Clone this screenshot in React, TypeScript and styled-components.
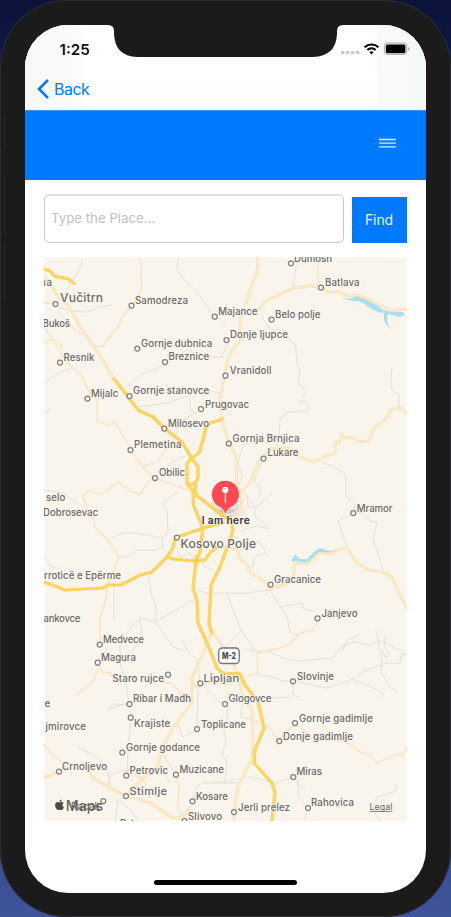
import React from "react";
import styled, { createGlobalStyle } from "styled-components";
import { FaApple } from "react-icons/fa";

const GlobalStyle = createGlobalStyle`
  * { box-sizing: border-box; }
  html, body { margin: 0; padding: 0; }
  body { width: 451px; height: 917px; overflow: hidden; font-family: Inter, "Liberation Sans", sans-serif; }
`;

const Desktop = styled.main`
  width: 451px;
  height: 917px;
  background: linear-gradient(#0b1339 0%, #131e55 12%, #2e4182 80%, #40549b 100%);
`;

const Device = styled.div`
  position: relative;
  width: 451px;
  height: 917px;
  padding: 25px;
  background: #1b1b1b;
  border-radius: 67px;
  box-shadow: inset 0 0 0 1px #2c2d33;
`;

const SideButton = styled.span<{ $top: number; $height: number }>`
  position: absolute;
  left: 0;
  top: ${(p) => p.$top}px;
  width: 5px;
  height: ${(p) => p.$height}px;
  border-right: 1px solid #292929;
  border-left: 1px solid #2b2b2b;
  background: #1b1b1b;
`;

const Screen = styled.div`
  position: relative;
  display: flex;
  flex-direction: column;
  width: 401px;
  height: 868px;
  border-radius: 43px;
  overflow: hidden;
  background: #fff;
`;

const Notch = styled.svg`
  position: absolute;
  left: 83px;
  top: 0;
  display: block;
`;

const TopChrome = styled.header`
  display: flex;
  flex-direction: column;
  height: 85px;
  background: linear-gradient(90deg, #f8f8f8 0, #fbfbfb 55px, transparent 62px, transparent 350px, #f8fafa 354px, #f7f9f8 100%),
    linear-gradient(#fff 50%, #fafdff);
`;

const StatusBar = styled.div`
  display: flex;
  justify-content: space-between;
  height: 47px;
  padding: 15px 15px 0 34.5px;
`;

const Clock = styled.time`
  font-size: 15.2px;
  line-height: 19px;
  font-weight: 600;
  color: #111;
`;

const NavBar = styled.nav`
  display: flex;
  height: 38px;
  padding: 5px 0 0 11px;
`;

const BackButton = styled.button`
  display: flex;
  align-items: flex-start;
  gap: 4px;
  height: 24px;
  padding: 0;
  border: 0;
  background: none;
  color: #007aff;
  font: 400 16px/24px Inter, sans-serif;
  letter-spacing: -0.5px;
`;

const BlueHeader = styled.div`
  display: flex;
  justify-content: flex-end;
  height: 70px;
  padding: 27px 30px 0 0;
  border-top: 1px solid #3c90f0;
  background: #007aff;
`;

const MenuButton = styled.button`
  width: 17px;
  height: 10px;
  padding: 0;
  border: 0;
  background: none;
  svg { display: block; }
`;

const SearchRow = styled.form`
  display: flex;
  align-items: flex-end;
  gap: 7.500px;
  height: 63px;
  padding: 14px 19.500px 0 19px;
  border-top: 1px solid #f6f7f8;
`;

const PlaceInput = styled.input`
  flex: none;
  width: 300px;
  height: 49px;
  padding: 0 6px 2px;
  border: 1px solid #c9c9c9;
  border-top: 2px solid #e0e0e0;
  border-radius: 5px;
  background: #fff;
  font: 400 13.3px Inter, sans-serif;
  letter-spacing: -0.02px;
  outline: none;
  &::placeholder { color: #c2c2c2; opacity: 1; }
`;

const FindButton = styled.button`
  flex: 1;
  height: 46.500px;
  padding: 0;
  border: 0;
  background: #007aff;
  color: #e6f2ff;
  font: 400 14px Inter, sans-serif;
  letter-spacing: -0.1px;
`;

const MapFrame = styled.section`
  height: 564px;
  margin: 14px 19px 0;
  svg.map { display: block; }
`;

const HomeIndicator = styled.div`
  width: 143px;
  height: 5px;
  margin: auto auto 8px 129px;
  border-radius: 3px;
  background: #000;
`;

const MapText = styled.text<{ $size: number; $weight?: number; $fill?: string }>`
  font-family: Inter, sans-serif;
  font-size: ${(p) => p.$size}px;
  font-weight: ${(p) => p.$weight ?? 500};
  fill: ${(p) => p.$fill ?? "#6b6b6a"};
  stroke: #f9f4ec;
  stroke-width: 1.4px;
  stroke-linejoin: round;
  paint-order: stroke;
`;

type Label = [text: string, x: number, end: number, y: number, cx?: number, cy?: number, size?: number];

const labels: Label[] = [
  ["Dumosh", 294, 332, 261.3, 291, 263.3],
  ["na", 40, 52, 286],
  ["Vučitrn", 60, 103, 301.9, 55.5, 304, 12],
  ["Bukoš", 42.5, 70, 326.7],
  ["Samodreza", 135, 188, 303.4, 131.5, 305.5],
  ["Majance", 218.3, 257.5, 315, 214.7, 316.7],
  ["Belo polje", 275, 320.5, 317.4, 271.5, 319.5],
  ["Donje ljupce", 230, 288, 337.7, 226.5, 340],
  ["Batlava", 325, 359.5, 285.7, 321, 287.5],
  ["Gornje dubnica", 141, 212.3, 346.8, 137.3, 348.5],
  ["Breznice", 168.5, 209.3, 360.1, 165, 362],
  ["Resnik", 63.5, 94.5, 360.7, 60, 362.5],
  ["Vranidoll", 229.7, 271.5, 373.8, 225.5, 375.7],
  ["Mijalc", 91, 118.3, 396.6, 87.5, 398.5],
  ["Gornje stanovce", 133, 209.3, 394, 129.5, 396],
  ["Prugovac", 205, 249, 407.6, 201, 409],
  ["Milosevo", 168, 209, 426.3, 164.3, 428.5],
  ["Plemetina", 134, 181.5, 448.2, 130.5, 450],
  ["Obilic", 159, 185, 476.1, 155, 478],
  ["Gornja Brnjica", 232.5, 299.5, 441.8, 228.8, 443.5],
  ["Lukare", 267.5, 298.5, 456.2, 263.5, 458.5],
  ["selo", 46, 65.3, 500.6],
  ["Dobrosevac", 43, 98, 515.3],
  ["Mramor", 356.8, 392.6, 511.5, 353.3, 513],
  ["Kosovo Polje", 180.5, 256, 547.6, 177, 537.5, 12],
  ["rroticë e Epërme", 44, 121, 579],
  ["Gracanice", 274, 321, 582.6, 270.5, 584.5],
  ["Janjevo", 321.5, 357.5, 616.4, 317.5, 618.3],
  ["ankovce", 43.5, 80.5, 621.8],
  ["Medvece", 103, 144, 642.5, 99.7, 644.5],
  ["Magura", 101, 136, 661.2, 97.7, 662.7],
  ["Staro rujce", 112.5, 164, 681.7, 168, 674.7],
  ["Lipljan", 203.5, 239, 681.7, 200.3, 683.3, 11],
  ["Slovinje", 297, 334, 679.5, 293, 681.3],
  ["e", 44.5, 50, 706.6],
  ["Ribar i Madh", 133, 191, 702.1, 129.5, 704],
  ["Glogovce", 228.5, 271.5, 702, 225, 704],
  ["Krajiste", 134, 170.3, 726.6, 130.7, 717.7],
  ["Toplicane", 201, 246, 727.6, 197, 729],
  ["jmirovce", 45.5, 86, 730.2],
  ["Gornje gadimlje", 299, 373, 721.9, 295, 723],
  ["Donje gadimlje", 283, 353, 739.7, 279.3, 741],
  ["Gornje godance", 126, 200, 750.6, 122.3, 752.5],
  ["Crnoljevo", 62, 107, 769.7, 59, 771.5],
  ["Petrovic", 129.5, 168, 773.4, 126.3, 775.5],
  ["Muzicane", 179.5, 224, 772.7, 176, 774.7],
  ["Miras", 296.5, 322, 774.8, 293.3, 777],
  ["Stimlje", 129.5, 167, 794.4, 126, 796, 11],
  ["Kosare", 196, 228, 799.5, 192.5, 801.3],
  ["Racak", 71, 100, 809.5, 103.3, 801],
  ["Slivovo", 188, 222, 819.3, 184.5, 821],
  ["Jerli prelez", 238, 290, 810.4, 234, 812],
  ["Rahovica", 311, 354, 806.1, 308, 808],
  ["Petrovo", 120, 153, 827],
];

const trails = [
  "83,258 78,272 68,288 62,298", "60,307 70,311 88,312 100,307 112,305", "58,312 80,334 85,333",
  "178,258 177,268 180,275 197,292 213,315 226,323", "297,258 293,288", "262,317 270,330 282,330 295,345 296,350 297,363 300,372 298,382 306,392 300,401 308,403 308,411 287,412 280,420 279,437 277,447",
  "392,368 391,377 392,390 399,395 399,407", "322,462 340,470 346,475 346,495 355,505 353,513 338,521 347,547",
  "353,513 363,513 370,521 377,522 373,538 383,570", "127,387 140,375 165,365 177,355 187,350 207,357 227,357",
  "137,407 167,403 190,395 190,410 196,413", "46,382 60,372 70,369", "133,394 207,390 220,393", "45,490 63,493 77,503",
  "160,474 172,462 186,456", "107,543 113,537 123,533 137,533 162,538 163,547 155,550 137,550 127,557 119,556",
  "168,533 167,510 162,503 177,492", "162,538 168,533", "44,558 48,561 51,567 57,568", "114,588 114,618",
  "148,575 152,597 156,608 155,622 163,633 173,647 183,650", "120,643 128,631 140,618 143,641 120,660", "140,618 155,622 197,598",
  "197,590 207,593 247,593 270,590", "227,594 241,630 223,650", "241,630 253,647 253,653", "270,590 280,607 302,603 304,609 313,611", "280,607 287,617 290,632 298,635",
  "120,643 120,663 126,682 129,703 131,718 128,752 127,775", "129,703 117,706 107,710 112,704 129,705", "183,640 187,650 197,660 200,683 220,702 228,704 227,720",
  "178,725 183,737 197,729 198,690", "78,747 98,758 108,770 109,787", "126,796 118,800 115,822", "118,800 130,810 139,822", "238,783 203,783 196,787 194,800",
  "247,650 270,652 283,658 300,661 333,658 342,647 353,642 370,645 380,640 401,651", "258,675 273,677 282,681 293,681 327,688 337,685 352,679 367,685 383,693 383,697",
  "352,679 363,672 380,665 387,663 400,663 403,653 407,656", "376,630 378,642 382,657 381,673 390,687 397,692", "386,636 384,645 389,654 386,658 382,650", "403,655 399,660",
  "293,682 293,695 299,697", "243,700 250,697 270,698 292,697", "222,717 226,743 222,755 227,763 225,780", "243,703 240,717 252,719", "215,783 250,777 277,783 293,777 301,787 305,789", "298,780 298,797 308,808 304,822",
  "396,784 396,791 377,797 373,807 376,815 382,822", "50,410 44,414", "346,642 340,650", "343,650 348,640 359,635",
  "187,551 193,557 200,555 204,566 213,570", "177,548 180,557 190,553", "230,340 224,352 220,358", "244,443 238,461 242,478 238,487 247,495 248,507",
  "263,460 254,481 260,487 259,498", "241,516 248,506 255,508 255,517 264,522 269,529 257,526 242,530", "241,547 259,541 266,553 254,557 253,567 247,566",
  "235,503 248,497 256,508 272,493",
];

const lanes = [
  "44,303 55,304", "44,327 53,340 60,343 62,350", "44,343 53,340", "139,258 142,268 141,277 142,287 137,297 132,305 122,317 118,327 105,342 103,347 95,346",
  "55,343 65,360 82,377 88,390 97,400 97,420 108,425 115,422 130,448 143,468 155,478 183,488 192,492",
  "143,468 147,465 157,462 165,450 177,433 177,425 183,420 200,410", "143,468 148,465", "152,477 140,494 132,492 118,482 100,495 90,490 83,495 87,508 93,517 95,528 103,535 112,545 119,557 108,585 105,602 100,618 100,643",
  "107,650 97,663 102,672 110,673 115,680", "98,670 92,683 76,695", "317,622 313,630 300,633 288,645 280,648 257,653 258,673 245,677",
  "318,258 318,277 321,287", "44,744 52,755 62,762 67,770 78,767 90,772", "110,787 110,775 123,770 137,772 145,783 150,798", "142,780 132,772",
  "162,753 176,775 179,787 178,807 183,820", "162,683 172,683 183,695", "192,683 198,688 206,683 230,684",
  "252,718 263,727 270,728 278,740 295,723 310,735 323,740 347,742 360,752 370,755 377,763 395,755 403,755 407,747", "156,766 163,770 170,783",
];

const roads = [
  "44,277 50,283 58,297 68,305 80,327 90,341 102,359 114,379",
  "258,258 257,273 250,290 245,307 240,318 240,330 241,340 233,349 227,363 223,383 220,400 222,420 228,440 236,457 237,487 241,497 242,513 233,517",
  "240,493 250,483 258,463 272,448 287,448 300,457 315,462 323,457 335,453 335,443 339,443 342,434 345,438 352,437 358,441 368,442 375,427 385,420 392,409 400,408 407,414",
  "255,313 268,299 275,297 293,288 305,287 309,285 315,287 321,287 328,292 340,292 347,296 357,295 368,299 382,306 392,311 407,309",
  "217,547 228,547 237,550 240,560 245,562 250,572 270,585 268,589 287,584 293,577 295,563 308,564 320,553 330,554 340,549 347,548 357,563 368,570 383,572 392,577 400,595 407,608",
  "209,630 211,635 192,678 192,703 173,727 162,750 157,767 142,780 127,795",
  "212,633 220,642 232,660 237,673 243,697 252,710 253,740 252,758 238,787 234,812 234,822",
  "44,777 50,776 58,771", "88,768 92,777 108,787 126,796 150,803 173,818 183,817 190,808",
];

const highways = [
  "44,269 50,271 55,276.5 68,278.7 74,283.3",
  "114,379 129,398 138,410 153,417 164,428 182,442 191.5,458",
  "191.5,458 199,453 202,443 206,428 210,423 217,421 222,419",
  "191.5,458 187,464 187,484 193,490 193.500,505 203,528 201,543 200,552 196,560 193,588 197,600 198,623 207,643 212,655 217,668 222,673 240,674 245,685 258,702 264,728 255,750 254,763 272,783 275,793 272,820",
  "191.5,458 198,467 198,478 195,483 188,485", "195,483 196,495 222,515 229,521",
  "44,582 65,590 85,589 103,588 108,585 121,585 140,575 152,572 167,557 173,548 175,538 203,528 223,523",
  "167,557 173,559 195,561 205,560 210,553 217,547",
  "230,517 233,530 230,540 220,567 211,585 209,623 212,633",
];

function Lines({ items, stroke, width }: { items: string[]; stroke: string; width: number }) {
  return (
    <g fill="none" stroke={stroke} strokeWidth={width} strokeLinejoin="round" strokeLinecap="round">
      {items.map((points) => <polyline key={points} points={points} />)}
    </g>
  );
}

function TownMap() {
  return (
    <svg className="map" width="363" height="564" viewBox="44 257 363 564" role="img" aria-label="Map">
      <rect x="44.300" y="257.500" width="362.400" height="565" fill="#f9f4ec" />
      <path d="M208 504l9-4 16 0 7 5-2 12-14 2-9-5z" fill="#e6e2dc" />
      <Lines items={trails} stroke="#e0dfda" width={0.9} />
      <Lines items={lanes} stroke="#fbe3bb" width={1.3} />
      <g fill="#a9dff1">
        <path d="M342 298l10 .5 4-3.5 6 3 6 0 2 4 7 3 6 5 9 2 11 0 2 3-5 2-12-3-1 4 1 7 4 4-5-3-3-6 0-7-6-1-10-5-5-4-6-2-5 0z" />
        <path d="M291 561.5l4-7 5 4.500 7 0 8-8 5-3 10 3 9-2-4 3-12 1.500-5 0-8 8-8 1.500-5-2z" />
      </g>
      <Lines items={roads} stroke="#f8dfae" width={2.7} />
      <Lines items={roads} stroke="#fef0cf" width={1.2} />
      <Lines items={highways} stroke="#f7cc63" width={3.2} />
      <Lines items={highways} stroke="#ffd757" width={2.2} />
      <path d="M196 556.500l4.500 4.500-4.500 4.500-4.500-4.500z" fill="#ffd24d" />
      <g fill="#faf5ee" stroke="#82817e" strokeWidth="1.25">
        {labels.filter((l) => l[4] !== undefined).map((l) => <circle key={l[0]} cx={l[4]} cy={l[5]} r="2.5" />)}
      </g>
      {labels.map(([text, x, end, y, , , size = 9.7]) => (
        <MapText key={text} $size={size} x={x} y={y + 0.2} textLength={end - x} lengthAdjust="spacing">{text}</MapText>
      ))}
      <rect x="218.700" y="648" width="20.500" height="15.500" rx="3.500" fill="#fff" stroke="#747474" strokeWidth="1.300" />
      <MapText $size={8.7} $weight={800} $fill="#4c4c4c" x="222" y="659.200" textLength="14" lengthAdjust="spacingAndGlyphs">M-2</MapText>
      <ellipse cx="227" cy="510.500" rx="8" ry="3" fill="#9b9692" opacity=".3" />
      <path d="M225.500 513.200c-1.500-3.500-3.400-5-6.300-6.700a13.600 13.600 0 1 1 12.400 0c-2.900 1.700-4.600 3.200-6.100 6.700z" fill="#fc4850" />
      <path d="M225.400 490v12.800" stroke="#ffd9db" strokeWidth="1.400" />
      <circle cx="225.300" cy="489.900" r="3.100" fill="#fff" />
      <circle cx="224.500" cy="488.900" r=".9" fill="#fc9ba0" />
      <MapText $size={10.2} $weight={600} $fill="#333" x="201.700" y="524" textLength="48" lengthAdjust="spacing">I am here</MapText>
      <FaApple x="53.500" y="798.800" size={12} color="#4b4a48" />
      <MapText $size={14.2} $weight={500} $fill="#555452" x="65.700" y="810.500" textLength="37.500" lengthAdjust="spacing" fillOpacity=".9" strokeOpacity="0">Maps</MapText>
      <MapText $size={8.8} $weight={400} $fill="#666" x="369.500" y="810.300" textLength="23" lengthAdjust="spacing">Legal</MapText>
      <path d="M369.500 811.400h23" stroke="#777" strokeWidth=".9" />
    </svg>
  );
}

function StatusIcons() {
  return (
    <svg width="71" height="16" viewBox="340 40 71 16">
      <g fill="#c9c9cb">
        <rect x="341" y="51" width="3.500" height="3.200" rx="1" /><rect x="346" y="51" width="3.500" height="3.200" rx="1" />
        <rect x="351" y="51" width="3.500" height="3.200" rx="1" /><rect x="356" y="51" width="3.500" height="3.200" rx="1" />
      </g>
      <g fill="none" stroke="#000" strokeWidth="2.100">
        <path d="M364.600 47.200a10 10 0 0 1 13.800 0" /><path d="M367.300 50a6.200 6.200 0 0 1 8.400 0" />
      </g>
      <path d="M371.500 54.400l-2.200-2.300q2.200-1.700 4.400 0z" />
      <rect x="384.400" y="43.100" width="22.400" height="11.400" rx="3.200" fill="none" stroke="#b5b5b5" strokeWidth="1.100" />
      <rect x="385.800" y="44.500" width="19.600" height="8.700" rx="1.500" />
      <path d="M408 47v3.700q1.500-.4 1.500-1.850T408 47z" fill="#aaa" />
    </svg>
  );
}

export default function App() {
  return (
    <Desktop>
      <GlobalStyle />
      <Device>
        <SideButton $top={115} $height={33} />
        <SideButton $top={176} $height={58} />
        <SideButton $top={243} $height={58} />
        <Screen>
          <TopChrome>
            <StatusBar>
              <Clock>1:25</Clock>
              <StatusIcons />
            </StatusBar>
            <NavBar>
              <BackButton type="button">
                <svg width="14" height="24" viewBox="0 0 14 24"><path d="M12 3L3 12l9 9" fill="none" stroke="#007aff" strokeWidth="2.600" strokeLinecap="butt" /></svg>
                Back
              </BackButton>
            </NavBar>
          </TopChrome>
          <BlueHeader>
            <MenuButton type="button" aria-label="Menu">
              <svg width="17" height="10" viewBox="0 0 17 10"><path d="M0 1.500h17M0 5.200h17M0 8.900h17" stroke="#d5e9ff" strokeWidth="1.300" /></svg>
            </MenuButton>
          </BlueHeader>
          <SearchRow onSubmit={(e: React.FormEvent) => e.preventDefault()}>
            <PlaceInput placeholder="Type the Place..." />
            <FindButton>Find</FindButton>
          </SearchRow>
          <MapFrame><TownMap /></MapFrame>
          <HomeIndicator />
          <Notch width="235" height="33" viewBox="108 25 235 33">
            <path d="M108 24v1q6 0 6 6v3q1 22 23 23h176q23-1 24-23v-3q0-6 6-6v-1z" fill="#1b1b1b" />
          </Notch>
        </Screen>
      </Device>
    </Desktop>
  );
}
